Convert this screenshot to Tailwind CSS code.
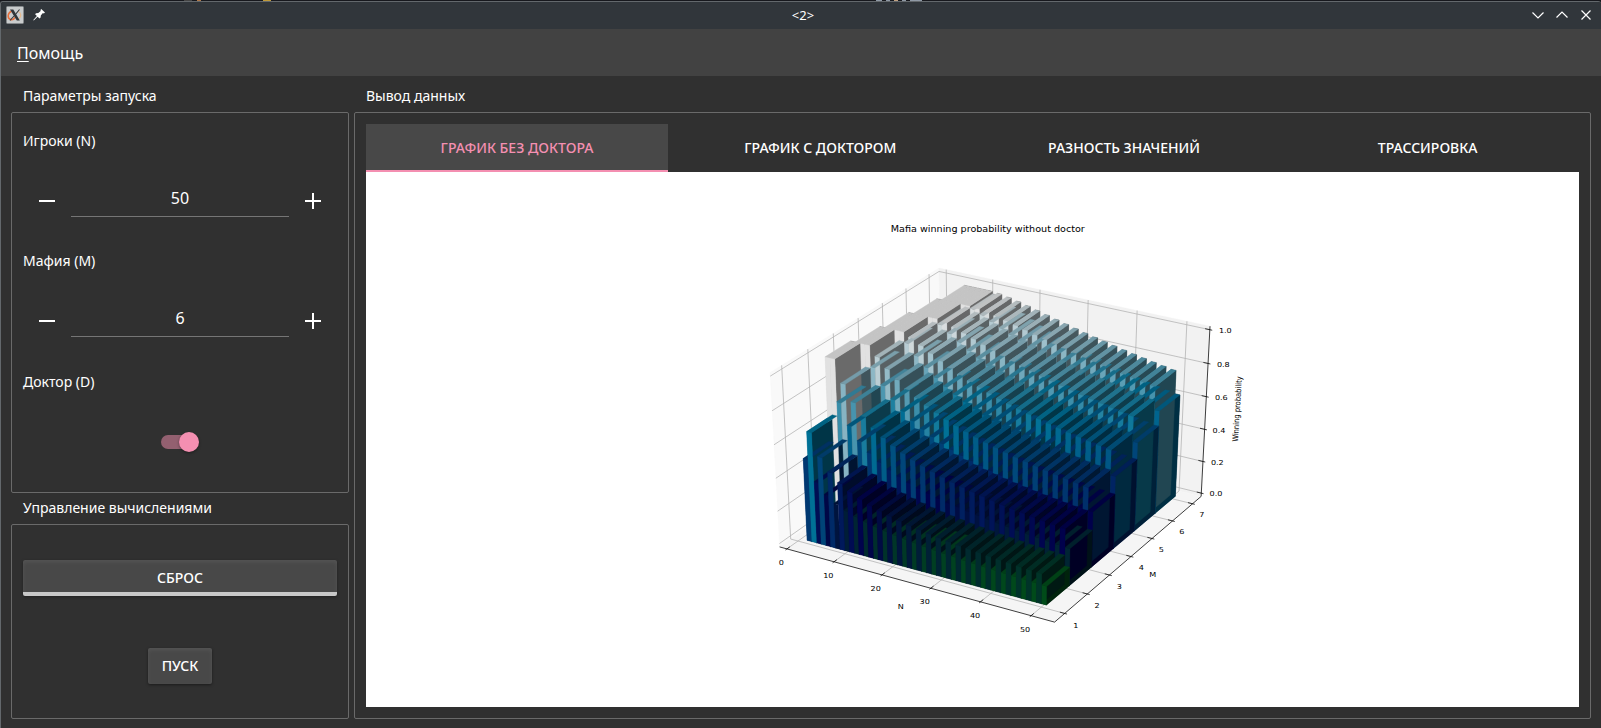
<!DOCTYPE html>
<html lang="ru">
<head>
<meta charset="utf-8">
<title>&lt;2&gt;</title>
<script src="https://cdn.jsdelivr.net/npm/@tailwindcss/browser@4"></script>
</head>
<body class="w-[1601px] h-[728px] overflow-hidden bg-[#1b1c22] text-white text-[14px] leading-5 font-['Noto_Sans',sans-serif]">
<div class="h-px flex bg-[#17181d]">
  <i class="w-2 h-px ml-[184px] bg-[#444]"></i><i class="w-1 h-px ml-[5px] bg-[#b07848]"></i><i class="w-2 h-px ml-[62px] bg-[#c09a3a]"></i><i class="w-1.5 h-px ml-[605px] bg-[#8f99a5]"></i><i class="w-1 h-px ml-1 bg-[#8f99a5]"></i><i class="w-1 h-px ml-1 bg-[#c0a080]"></i><i class="w-1 h-px ml-1 bg-[#8f99a5]"></i><i class="w-3 h-px ml-1 bg-[#8f99a5]"></i>
</div>
<div class="h-[727px] flex flex-col border-t border-l border-[#63686c] bg-[#303030] rounded-t-[3px] overflow-hidden">
  <header class="h-[27px] shrink-0 bg-[#31363b] flex items-center pl-[5px] pr-[9px] pb-px">
    <svg class="size-[18px]" viewBox="0 0 18 18"><rect x=".5" y=".5" width="17" height="17" rx="1" fill="#c9cccd" stroke="#85898c"/><path d="M5.500 5.200C1.500 7 1 12 4.500 13.500C6 14.200 8 13 9 11.500" fill="none" stroke="#e8703c" stroke-width="1.500"/><path d="M12 5.500C15.500 6.500 15.500 11 13 12.500" fill="none" stroke="#e6b98c" stroke-width="1.200"/><path d="M4 3.500H7.300L13.800 14.500H10.800Z" fill="#303537"/><path d="M13.500 3.500L9.800 8M8 10L4 14.500" stroke="#303537" stroke-width="1.100"/></svg>
    <svg class="size-3 ml-[9px]" viewBox="0 0 12 12" fill="#fff"><path d="M8.200 0L12 3.600L10.800 4.400L9.900 4.100L7.800 6.400L7.600 8.600L6.500 9.500L4.600 7.700L.8 11.500L.3 11.100L3.900 7L2.100 5.200L3 4.200L5.300 4L7.700 1.900L7.500 .9Z"/></svg>
    <div class="grow text-center text-[13px] pl-[29px]">&lt;2&gt;</div>
    <div class="flex gap-3 text-white">
      <svg class="size-3" viewBox="0 0 12 12" fill="none" stroke="currentColor" stroke-width="1.200"><path d="M.5 3.500L6 9L11.500 3.500"/></svg>
      <svg class="size-3" viewBox="0 0 12 12" fill="none" stroke="currentColor" stroke-width="1.200"><path d="M.5 8.500L6 3L11.500 8.500"/></svg>
      <svg class="size-3" viewBox="0 0 12 12" fill="none" stroke="currentColor" stroke-width="1.200"><path d="M1.500 1.500L10.500 10.500M10.500 1.500L1.500 10.500"/></svg>
    </div>
  </header>
  <nav class="h-[47px] shrink-0 bg-[#424242] flex items-center pl-4 text-[16px]"><span><span class="underline underline-offset-2 decoration-1">П</span>омощь</span></nav>
  <main class="flex gap-[5px] pl-2.5 pr-2.5 pt-[10px]">
    <section class="w-[338px] flex flex-col">
      <h2 class="h-[26px] pl-3 leading-5">Параметры запуска</h2>
      <div class="h-[381px] border border-[#6a6a6a] rounded-[2px] px-[11px] pt-[18px]">
        <div class="h-5">Игроки (N)</div>
        <div class="h-[100px] mt-[38px] flex items-start">
          <svg class="size-4 ml-4 mt-1" viewBox="0 0 16 16"><path d="M0 7H16V9H0Z" fill="#fff"/></svg>
          <div class="w-[218px] h-[28px] ml-4 border-b border-[#757575] text-center text-[16px] leading-[19px]">50</div>
          <svg class="size-4 ml-4 mt-1" viewBox="0 0 16 16"><path d="M0 7H7V0H9V7H16V9H9V16H7V9H0Z" fill="#fff"/></svg>
        </div>
        <div class="h-5 -mt-[38px]">Мафия (M)</div>
        <div class="h-[101px] mt-[38px] flex items-start">
          <svg class="size-4 ml-4 mt-1" viewBox="0 0 16 16"><path d="M0 7H16V9H0Z" fill="#fff"/></svg>
          <div class="w-[218px] h-[28px] ml-4 border-b border-[#757575] text-center text-[16px] leading-[19px]">6</div>
          <svg class="size-4 ml-4 mt-1" viewBox="0 0 16 16"><path d="M0 7H7V0H9V7H16V9H9V16H7V9H0Z" fill="#fff"/></svg>
        </div>
        <div class="h-5 -mt-[38px]">Доктор (D)</div>
        <div class="flex justify-center mt-[40px]"><div class="w-[38px] h-5 flex items-center"><div class="w-[34px] h-3.5 rounded-full bg-[#936070] flex items-center justify-end"><div class="size-5 shrink-0 -mr-1 rounded-full bg-[#f48fb1] shadow-[0_1px_3px_rgba(0,0,0,.4)]"></div></div></div></div>
      </div>
      <h2 class="h-[31px] pl-3 pt-[5px] leading-5">Управление вычислениями</h2>
      <div class="h-[195px] border border-[#6a6a6a] rounded-[2px] px-[11px] pt-[35px] flex flex-col items-center font-medium">
        <button class="w-full h-9 rounded-[2px] bg-[#484848] border-b-4 border-[#c8c8c8] pt-[3px] leading-[29px] shadow-[inset_0_2px_4px_rgba(255,255,255,.07),0_1px_3px_rgba(0,0,0,.35)]">СБРОС</button>
        <button class="w-16 h-9 mt-[52px] rounded-[2px] bg-[#484848] shadow-[inset_0_2px_4px_rgba(255,255,255,.07),0_1px_3px_rgba(0,0,0,.45)]">ПУСК</button>
      </div>
    </section>
    <section class="w-[1237px] flex flex-col">
      <h2 class="h-[26px] pl-3 leading-5">Вывод данных</h2>
      <div class="h-[607px] border border-[#6a6a6a] rounded-[2px] p-[11px]">
        <div class="h-12 grid grid-cols-[302px_1fr_1fr_1fr] gap-x-px text-center font-medium leading-[48px]">
          <div class="h-12 bg-[#484848] border-b-2 border-[#f48fb1] text-[#f48fb1]">ГРАФИК БЕЗ ДОКТОРА</div>
          <div>ГРАФИК С ДОКТОРОМ</div>
          <div>РАЗНОСТЬ ЗНАЧЕНИЙ</div>
          <div>ТРАССИРОВКА</div>
        </div>
        <div class="bg-white h-[535px]">
          <svg id="chart" class="block w-[1213px] h-[535px] font-['DejaVu_Sans',sans-serif]" viewBox="366 172 1213 535"></svg>
        </div>
      </div>
    </section>
  </main>
</div>
<script>
// Perspective view: elevation 30, azimuth -60
const LIM = [[-1.57, 54.57], [0.5625, 7.4375], [-0.0208, 1.0208]];
const BOX = [1.1429, 1.1429, 0.8571];
const frac = (v, a) => (v - LIM[a][0]) / (LIM[a][1] - LIM[a][0]);
function projF(a, b, c) {
  const x = (a - .5) * BOX[0], y = (b - .5) * BOX[1], z = (c - .5) * BOX[2];
  const d = 10 - (.43301 * x - .75 * y + .5 * z);
  return [994.1 + 2757 * (.86603 * x + .5 * y) / d, 436.9 - 2320 * (-.25 * x + .43301 * y + .86603 * z) / d, 1 / d];
}
const proj = (x, y, z) => projF(frac(x, 0), frac(y, 1), frac(z, 2));
let out = '';
const pt = p => p[0].toFixed(2) + ',' + p[1].toFixed(2);
const poly = (ps, fill) => out += `<polygon points="${ps.map(pt).join(' ')}" fill="${fill}" stroke="${fill}" stroke-width=".3"/>`;
const line = (ps, s, w) => out += `<polyline points="${ps.map(pt).join(' ')}" fill="none" stroke="${s}" stroke-width="${w}"/>`;
// panes
poly([projF(0,0,0), projF(0,1,0), projF(0,1,1), projF(0,0,1)], '#f9f9f9');
poly([projF(0,1,0), projF(1,1,0), projF(1,1,1), projF(0,1,1)], '#f2f2f2');
poly([projF(0,0,0), projF(1,0,0), projF(1,1,0), projF(0,1,0)], '#f5f5f5');
const xt = [0,10,20,30,40,50], yt = [1,2,3,4,5,6,7], zt = [0,.2,.4,.6,.8,1];
for (const v of xt) { const f = frac(v, 0); line([projF(f,0,0), projF(f,1,0), projF(f,1,1)], '#b0b0b0', .75); }
for (const v of yt) { const f = frac(v, 1); line([projF(1,f,0), projF(0,f,0), projF(0,f,1)], '#b0b0b0', .75); }
for (const v of zt) { const f = frac(v, 2); line([projF(0,0,f), projF(0,1,f), projF(1,1,f)], '#b0b0b0', .75); }
line([projF(0,0,0), projF(1,0,0), projF(1,1,0), projF(1,1,1)], '#000', .75);
for (const v of xt) { const f = frac(v, 0); line([projF(f,-.0083,0), projF(f,.0167,0)], '#000', .75); }
for (const v of yt) { const f = frac(v, 1); line([projF(1.0083,f,0), projF(.9833,f,0)], '#000', .75); }
for (const v of zt) { const f = frac(v, 2); line([projF(1.0083,1,f), projF(.9833,1,f)], '#000', .75); }
// winning probability for n players, m mafia
const memo = {};
function win(n, m) {
  if (m <= 0) return 0;
  if (m >= n) return 1;
  const k = n + '_' + m;
  if (!(k in memo)) memo[k] = m / n * win(n - 2, m - 1) + (n - m) / n * win(n - 2, m);
  return memo[k];
}
const clamp = v => Math.max(0, Math.min(1, v));
const ocean = v => [clamp(3 * v - 2), clamp(Math.abs((3 * v - 1) / 2)), clamp(v)];
const faces = [];
for (let m = 1; m <= 6; m++) for (let n = Math.max(2, m); n <= 50; n++) {
  const h = win(n, m), c = ocean(h), X = n + 1, Y = m + 1;
  const add = (q, s) => {
    const p = q.map(a => proj(...a));
    faces.push({ p, k: (p[0][2] + p[1][2] + p[2][2] + p[3][2]) / 4, f: 'rgb(' + c.map(u => Math.round(u * s * 255)).join(',') + ')' });
  };
  add([[n,m,0],[X,m,0],[X,Y,0],[n,Y,0]], .533);
  add([[n,m,h],[X,m,h],[X,Y,h],[n,Y,h]], .767);
  add([[n,m,0],[X,m,0],[X,m,h],[n,m,h]], .883);
  add([[n,Y,0],[X,Y,0],[X,Y,h],[n,Y,h]], .417);
  add([[n,m,0],[n,Y,0],[n,Y,h],[n,m,h]], .883);
  add([[X,m,0],[X,Y,0],[X,Y,h],[X,m,h]], .417);
}
faces.sort((a, b) => a.k - b.k).forEach(f => poly(f.p, f.f));
// labels
const K = 1.188;
const label = (x, y, t, s = 6.8, extra = '') => out += `<text transform="translate(${x} ${y}) scale(${K} 1)${extra}" text-anchor="middle" font-size="${s}" y="${(s * .365).toFixed(2)}">${t}</text>`;
[[781.3,562.3,'0'],[828.3,575.3,'10'],[875.7,588.3,'20'],[924.7,602,'30'],[975,615.3,'40'],[1025,629.7,'50'],[900.7,606.7,'N'],
 [1075.7,625.3,'1'],[1097,605.7,'2'],[1119.3,586.7,'3'],[1141.3,567.7,'4'],[1161.3,549.7,'5'],[1181.7,532,'6'],[1201.7,515,'7'],[1152.7,574.3,'M'],
 [1216,494,'0.0'],[1217.3,462.3,'0.2'],[1219,430.3,'0.4'],[1221.3,397.7,'0.6'],[1223.3,364.7,'0.8'],[1225.3,330.3,'1.0']].forEach(a => label(...a));
label(987.8, 229, 'Mafia winning probability without doctor', 8.1);
label(1237, 409, 'Winning probability', 6.75, ' rotate(-87)');
document.getElementById('chart').innerHTML = out;
</script>
</body>
</html>
